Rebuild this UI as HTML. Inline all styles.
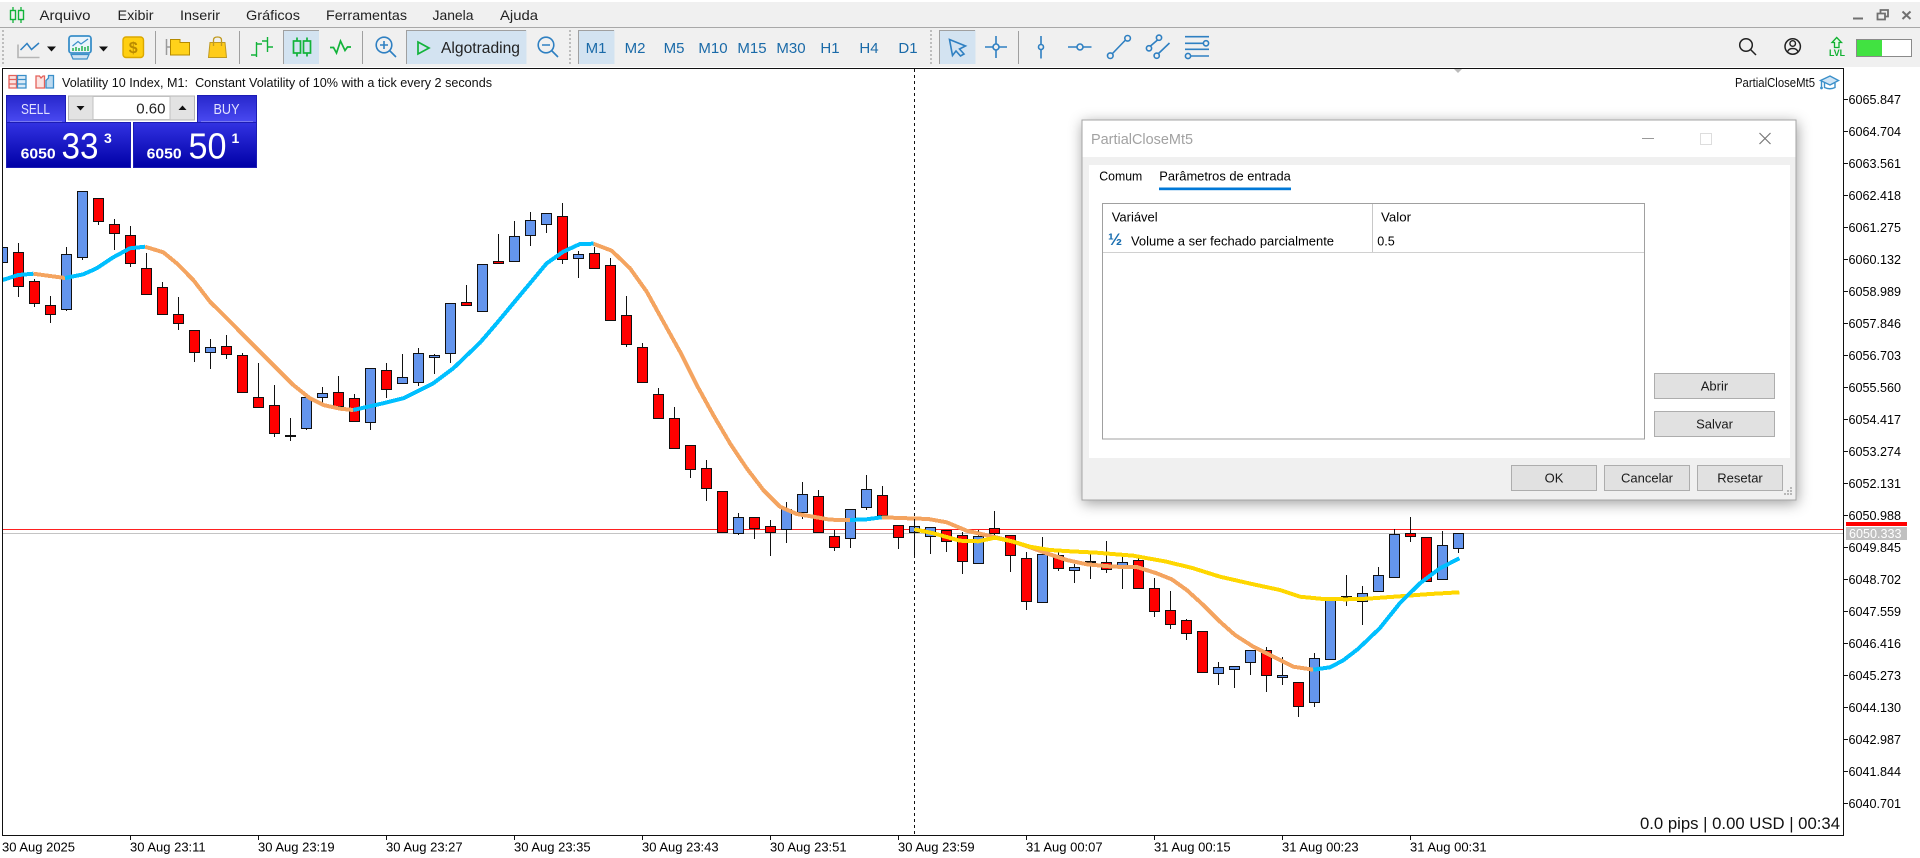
<!DOCTYPE html>
<html lang="pt"><head><meta charset="utf-8"><title>MetaTrader 5</title>
<style>
html,body{margin:0;padding:0;background:#fff;width:1920px;height:858px;overflow:hidden}
svg{display:block;font-family:"Liberation Sans",sans-serif}
.m{font-size:14px;fill:#222}
.tf{font-size:15px;fill:#1a6aa8;text-anchor:middle}
.p{font-size:13px;fill:#000}
.d{font-size:13px;fill:#000}
.c{font-size:13px;fill:#1a1a1a;text-anchor:middle}
.b{fill:#e1e1e1;stroke:#adadad}
.ic{fill:none;stroke:#2f80c2;stroke-width:1.6}
.gn{fill:none;stroke:#12b33a;stroke-width:1.7}
.hl{fill:#d3e3f1;stroke:none}
.sep{stroke:#a0a0a0;stroke-width:1}
.grip{stroke:#bdbdbd;stroke-width:2;stroke-dasharray:2 2}
</style></head><body>
<svg width="1920" height="858" viewBox="0 0 1920 858" xmlns="http://www.w3.org/2000/svg">
<defs>
<linearGradient id="g1" x1="0" y1="0" x2="0" y2="1"><stop offset="0" stop-color="#3232e2"/><stop offset="1" stop-color="#0000a6"/></linearGradient>
<linearGradient id="g2" x1="0" y1="0" x2="0" y2="1"><stop offset="0" stop-color="#2727cc"/><stop offset="1" stop-color="#4a4af2"/></linearGradient>
<clipPath id="cc"><rect x="3" y="69" width="1840" height="766"/></clipPath>
</defs>
<rect width="1920" height="858" fill="#fff"/>
<!-- menu + toolbar -->
<rect y="2" width="1920" height="65" fill="#f0f0f0"/>
<rect y="27" width="1920" height="1" fill="#a8a8a8"/>
<path d="M13 7V23M21 7V23" class="gn" style="stroke-width:1.3"/>
<rect x="10.5" y="10.5" width="5" height="9" class="gn" style="fill:#f0f0f0;stroke-width:1.4"/><rect x="18.5" y="10.5" width="5" height="9" class="gn" style="fill:#f0f0f0;stroke-width:1.4"/>
<g class="m">
<text x="39.5" y="20" textLength="51" lengthAdjust="spacingAndGlyphs">Arquivo</text>
<text x="117.5" y="20" textLength="36" lengthAdjust="spacingAndGlyphs">Exibir</text>
<text x="180" y="20" textLength="40" lengthAdjust="spacingAndGlyphs">Inserir</text>
<text x="246" y="20" textLength="54" lengthAdjust="spacingAndGlyphs">Gráficos</text>
<text x="326" y="20" textLength="81" lengthAdjust="spacingAndGlyphs">Ferramentas</text>
<text x="432.5" y="20" textLength="41" lengthAdjust="spacingAndGlyphs">Janela</text>
<text x="500" y="20" textLength="38" lengthAdjust="spacingAndGlyphs">Ajuda</text>
</g>
<path class="grip" d="M3 30V64M570 30V64M931 30V64"/>
<path d="M18 44.5V57.5H39.5" fill="none" stroke="#b5b5b5" stroke-width="1.6"/>
<path d="M20.5 50L27 43.5L31.5 49.5L39 43" fill="none" stroke="#2f80c2" stroke-width="1.5"/>
<path d="M47 46.5h9l-4.5 5zM99 46.5h9l-4.5 5z" fill="#111"/>
<rect x="69" y="36" width="22" height="17" rx="2.5" fill="#eaf4fb" stroke="#3a8fc9" stroke-width="1.8"/>
<path d="M72.5 46L78 41.5L81 44L88 39" fill="none" stroke="#3a8fc9" stroke-width="1.2"/>
<path d="M73 51V48M76 51V47M79 51V48M82 51V46M85 51V47M88 51V46" stroke="#22b14c" stroke-width="1.5"/>
<path d="M71 54.5H89L87 59H73Z" fill="#cfe3f2" stroke="#3a8fc9" stroke-width="1.2"/>
<rect x="123" y="37" width="20.5" height="20.5" rx="3" fill="#ffcf10" stroke="#dba800" stroke-width="1.4"/>
<text x="133.2" y="53" font-size="16" font-weight="bold" fill="#b98a00" text-anchor="middle">$</text>
<path class="sep" d="M155.5 31V64M239.5 31V64M362.5 31V64M1018.5 31V64"/>
<path d="M166.5 39V55M166.5 47H171" stroke="#9a9a9a" stroke-width="1.5" fill="none"/>
<path d="M170.5 39.5H180V42.5H189.5V55H170.5Z" fill="#ffd21a" stroke="#b58a00" stroke-width="1"/>
<path d="M210 42.5H225L226.5 57.5H208.5Z" fill="#ffcc1a" stroke="#c09a20" stroke-width="1"/>
<path d="M213.5 46V40Q213.5 37 217.5 37Q221.5 37 221.5 40V46" fill="none" stroke="#c09a20" stroke-width="1.3"/>
<path d="M256.5 42V57M251 55H256.5M256.5 44H262M267.5 37V52M262 41H267.5M267.5 47H273" class="gn" style="stroke-width:1.4"/>
<rect x="283" y="30" width="36" height="34" class="hl"/><path d="M283.5 64V30.5H319" fill="none" stroke="#a0a0a0"/>
<path d="M297 37.5V56.5M307 37.5V56.5" class="gn"/><rect x="293.5" y="41" width="7" height="12" class="gn" style="fill:#d3e3f1"/><rect x="303.5" y="41" width="7" height="12" class="gn" style="fill:#d3e3f1"/>
<path d="M330 47.5h3.5l3 5.5l4-12l4.500 9.500l2.500-3.500h3.500" class="gn"/>
<circle cx="384" cy="45" r="7.800" class="ic"/><path d="M380 45h8M384 41v8M389.5 50.5L396 57" class="ic"/>
<rect x="406" y="30" width="120.5" height="34" class="hl"/><path d="M406.5 64V30.5H526" fill="none" stroke="#a0a0a0"/>
<path d="M418 42L429 48L418 54Z" class="gn"/>
<text x="441" y="53" font-size="15.500" fill="#222" textLength="79" lengthAdjust="spacingAndGlyphs">Algotrading</text>
<circle cx="546" cy="45" r="7.800" class="ic"/><path d="M542 45h8M551.5 50.5L558 57" class="ic"/>
<rect x="578" y="30" width="36.5" height="34" class="hl"/><path d="M578.5 64V30.5H614" fill="none" stroke="#a0a0a0"/>
<g class="tf">
<text x="596" y="53">M1</text><text x="635" y="53">M2</text><text x="674" y="53">M5</text><text x="713" y="53">M10</text><text x="752" y="53">M15</text><text x="791" y="53">M30</text><text x="830" y="53">H1</text><text x="869" y="53">H4</text><text x="908" y="53">D1</text>
</g>
<rect x="939" y="30" width="36.5" height="34" class="hl"/><path d="M939.5 64V30.5H975" fill="none" stroke="#a0a0a0"/>
<path d="M949.5 39.5L965.5 46L959.5 49L964 54L960.5 56L956 51L952.5 55.5Z" class="ic"/>
<path d="M985 47H993M999 47H1007M996 36V44M996 50V58" class="ic"/><circle cx="996" cy="47" r="3" class="ic"/>
<path d="M1041 36V44M1041 50V58.5M1068 47H1077M1083 47H1091.5M1112.5 53.5L1125.5 40" class="ic"/><circle cx="1041" cy="47" r="2.5" class="ic"/><circle cx="1080" cy="47" r="3" class="ic"/><circle cx="1110.3" cy="55.7" r="2.8" class="ic"/><circle cx="1127.6" cy="38.3" r="2.8" class="ic"/>
<path d="M1150.5 46L1157.5 40M1158.5 53.5L1169.5 43" class="ic"/><circle cx="1149" cy="48.3" r="2.6" class="ic"/><circle cx="1159" cy="37.7" r="2.6" class="ic"/><circle cx="1156.7" cy="55.7" r="2.6" class="ic"/>
<path d="M1185 36.7H1209M1185 43.3H1203M1185 49.3H1209M1191 56H1209" class="ic"/><circle cx="1206" cy="43.3" r="2.6" class="ic" style="fill:#f0f0f0"/><circle cx="1188" cy="56" r="2.6" class="ic" style="fill:#f0f0f0"/>
<!-- right top -->
<rect x="1853" y="17.5" width="10" height="2" fill="#707070"/>
<path d="M1877.5 13.5h7.500v6h-7.500zM1880.5 13.5v-3.500h7.500v6.500h-3" fill="none" stroke="#707070" stroke-width="1.8"/>
<path d="M1902.5 11.5L1910.5 19M1910.5 11.5L1902.5 19" stroke="#707070" stroke-width="2"/>
<circle cx="1746" cy="45" r="6.3" fill="none" stroke="#222" stroke-width="1.5"/><path d="M1750.5 49.5L1756 55" stroke="#222" stroke-width="1.5"/>
<circle cx="1792.7" cy="46.5" r="7.7" fill="none" stroke="#222" stroke-width="1.5"/><circle cx="1792.7" cy="43.5" r="2.8" fill="none" stroke="#222" stroke-width="1.4"/><path d="M1787.5 52Q1788.5 48.5 1792.7 48.5Q1797 48.5 1798 52" fill="none" stroke="#222" stroke-width="1.4"/>
<path d="M1836.7 37.5L1841.5 42.5H1839V47.5H1834.5V42.5H1832Z" fill="#e8fbe8" stroke="#10b030" stroke-width="1.3"/>
<text x="1837" y="56" font-size="9.5" font-weight="bold" fill="#10b030" text-anchor="middle" textLength="16" lengthAdjust="spacingAndGlyphs">LVL</text>
<rect x="1856.5" y="39.5" width="55" height="17" fill="#fff" stroke="#8a8a8a"/><rect x="1857" y="40" width="25" height="16" fill="#41e241"/>
<!-- chart lines -->
<rect x="3" y="529" width="1840" height="1" fill="#ff2020"/>
<rect x="3" y="533" width="1840" height="1" fill="#c4c4c4"/>
<g clip-path="url(#cc)">
<path stroke="#111" stroke-width="1" fill="none" d="M18.5 243V297M34.5 279V307M50.5 296V323M66.5 247V311M82.5 191V260M98.5 198V225M114.5 219V250M130.5 226V267M146.5 253V295M162.5 282V315M178.5 297V330M194.5 330V362M210.5 339V369M226.5 335V359M242.5 353V393M258.5 363V408M274.5 385V437M290.5 418V441M306.5 397V430M322.5 387V403M338.5 376V407M354.5 394V422M370.5 368V430M386.5 363V398M402.5 354V384M418.5 348V386M434.5 354V374M450.5 303V363M466.5 285V306M498.5 234V264M514.5 221V262M530.5 212V246M546.5 213V233M562.5 203V264M578.5 251V278M594.5 247V269M610.5 258V321M626.5 296V347M642.5 343V383M658.5 388V419M674.5 407V449M690.5 445V478M706.5 460V501M738.5 513V535M754.5 517V539M770.5 520V556M786.5 502V543M802.5 482V519M818.5 490V533M834.5 530V551M850.5 509V548M866.5 475V510M882.5 486V516M898.5 525V549M914.5 521V556M930.5 527V554M946.5 530V552M962.5 532V574M978.5 530V564M994.5 511V535M1010.5 535V572M1026.5 552V610M1042.5 537V603M1058.5 552V571M1074.5 564V583M1090.5 553V579M1106.5 541V573M1122.5 555V589M1138.5 558V589M1154.5 578V617M1170.5 591V629M1186.5 619V640M1218.5 662V685M1234.5 666V688M1250.5 650V675M1266.5 647V692M1282.5 657V685M1298.5 682V717M1314.5 653V707M1346.5 575V606M1362.5 586V625M1378.5 567V592M1394.5 529V578M1410.5 517V542M1442.5 531V580M1458.5 533V553"/>
<path fill="#ff0000" stroke="#111" stroke-width="1" d="M13.5 252.5h10v34h-10zM29.5 281.5h10v22h-10zM45.5 305.5h10v9h-10zM93.5 198.5h10v23h-10zM109.5 224.5h10v9h-10zM125.5 235.5h10v28h-10zM141.5 268.5h10v26h-10zM157.5 287.5h10v27h-10zM173.5 314.5h10v9h-10zM189.5 330.5h10v22h-10zM221.5 346.5h10v8h-10zM237.5 355.5h10v37h-10zM253.5 397.5h10v10h-10zM269.5 405.5h10v28h-10zM285.5 435.5h10v1h-10zM333.5 392.5h10v14h-10zM349.5 398.5h10v23h-10zM381.5 370.5h10v19h-10zM461.5 302.5h10v3h-10zM493.5 261.5h10v2h-10zM557.5 216.5h10v43h-10zM589.5 253.5h10v15h-10zM605.5 265.5h10v55h-10zM621.5 315.5h10v29h-10zM637.5 347.5h10v35h-10zM653.5 394.5h10v24h-10zM669.5 418.5h10v30h-10zM685.5 445.5h10v24h-10zM701.5 468.5h10v20h-10zM717.5 491.5h10v41h-10zM749.5 517.5h10v11h-10zM765.5 526.5h10v6h-10zM813.5 496.5h10v36h-10zM829.5 536.5h10v11h-10zM877.5 495.5h10v20h-10zM893.5 525.5h10v12h-10zM941.5 530.5h10v11h-10zM957.5 535.5h10v26h-10zM989.5 528.5h10v5h-10zM1005.5 535.5h10v20h-10zM1021.5 558.5h10v43h-10zM1053.5 555.5h10v13h-10zM1085.5 561.5h10v1h-10zM1101.5 562.5h10v7h-10zM1133.5 560.5h10v28h-10zM1149.5 588.5h10v23h-10zM1165.5 610.5h10v14h-10zM1181.5 620.5h10v13h-10zM1197.5 631.5h10v41h-10zM1261.5 650.5h10v25h-10zM1293.5 682.5h10v24h-10zM1341.5 596.5h10v1h-10zM1405.5 533.5h10v3h-10zM1421.5 537.5h10v44h-10z"/>
<path fill="#6495ed" stroke="#111" stroke-width="1" d="M-2.5 247.5h10v15h-10zM61.5 254.5h10v55h-10zM77.5 191.5h10v66h-10zM205.5 347.5h10v5h-10zM301.5 397.5h10v31h-10zM317.5 393.5h10v4h-10zM365.5 368.5h10v54h-10zM397.5 377.5h10v6h-10zM413.5 353.5h10v29h-10zM429.5 355.5h10v2h-10zM445.5 303.5h10v50h-10zM477.5 264.5h10v47h-10zM509.5 236.5h10v25h-10zM525.5 220.5h10v15h-10zM541.5 213.5h10v11h-10zM573.5 254.5h10v4h-10zM733.5 517.5h10v16h-10zM781.5 509.5h10v20h-10zM797.5 494.5h10v18h-10zM845.5 509.5h10v29h-10zM861.5 489.5h10v18h-10zM909.5 526.5h10v6h-10zM925.5 527.5h10v9h-10zM973.5 536.5h10v27h-10zM1037.5 554.5h10v48h-10zM1069.5 567.5h10v3h-10zM1117.5 562.5h10v4h-10zM1213.5 667.5h10v6h-10zM1229.5 666.5h10v3h-10zM1245.5 650.5h10v12h-10zM1277.5 675.5h10v2h-10zM1309.5 658.5h10v44h-10zM1325.5 597.5h10v62h-10zM1357.5 593.5h10v8h-10zM1373.5 575.5h10v16h-10zM1389.5 534.5h10v43h-10zM1437.5 545.5h10v34h-10zM1453.5 533.5h10v15h-10z"/>
<g fill="none" stroke-width="4" stroke-linejoin="round" shape-rendering="crispEdges">
<path stroke="#f4a460" d="M33.3 273.7L50 276L65 278M145 246.7L163.3 252.3L176.7 263.3L193.3 280L210 301.7L226.7 318.3L243.3 335L260 351.7L275 366.7L293.3 385L310 398.3L323.3 405L340 408.7L353.3 410M593.3 243.7L611.7 250.7L630 268.3L646.7 291.7L663.3 321.7L680 351.7L696.7 385L713.3 415L730 443.3L746.7 468.3L763.3 490L780 506.7L796.7 514L813.3 516.7L830 519.7L850 520M881.7 517.3L900 518L928.3 519L946.7 522.3L966.7 530.7L993.3 536.7L1013.3 541.7L1030 547.3L1046.7 553.3L1066.7 560L1086.7 564.3L1113.3 566.7L1136.7 567L1156.7 573.3L1171.7 579.3L1186.7 590L1203.3 605L1220 621.7L1235 635L1253.3 646.7L1270 655L1293.3 666.7L1313.3 669.7"/>
<path stroke="#ffd700" d="M914.3 529.3L933.3 533.3L960 540.7L978.3 541.3L995 537.7L1013.3 541.7L1030 546.7L1050 550L1070 551.3L1096.7 552.7L1133.3 555.7L1166.7 561.7L1193.3 568.3L1220 576.7L1253.3 584.3L1280 590L1300 596.7L1323.3 599L1346.7 599.3L1366.7 598.7L1400 596.3L1430 594L1459.3 592.3"/>
<path stroke="#00bfff" d="M2.7 280L18.3 275L33.3 273.7M65 278L83.3 274.3L96.7 268.3L113.3 257.3L130 248.3L145 246.7M353.3 410L380 404L403.3 398.3L433.3 383.3L453.3 368.3L480 342.7L496.7 323.3L513.3 303.3L530 283.3L546.7 263.3L563.3 251.7L580 244L593.3 243.7M850 520L866.7 519.3L881.7 517.3M1313.3 669.7L1330 667.3L1343 660.5L1358 649L1380 628L1400 603L1420 583.3L1440 568.3L1459.3 558.3"/>
</g>
</g>
<path d="M914.5 69V835" stroke="#111" stroke-width="1" stroke-dasharray="3 3"/>
<path d="M1453 68h10l-5 5z" fill="#bbb"/>
<!-- frame -->
<rect x="2" y="68" width="1842" height="1" fill="#111"/><rect x="2" y="68" width="1" height="768" fill="#111"/><rect x="1843" y="68" width="1" height="768" fill="#111"/><rect x="2" y="835" width="1842" height="1" fill="#111"/>
<!-- chart header -->
<g stroke-width="1.3" fill="none">
<path d="M16.5 75.5H9V88H16.5ZM9 79.5H16.5M9 84H16.5" stroke="#e4615a" fill="#fbe3e1"/>
<path d="M17.5 75.5H26V88H17.5ZM17.5 79.5H26M17.5 84H26" stroke="#3a8fc9" fill="#dcebf7"/>
<path d="M36 76H39.5L41 78L43 76H44.5V88H36Z" stroke="#e4615a" fill="#fbe3e1"/>
<path d="M46 80.5L48.5 78V75.5H53.5V88H46Z" stroke="#3a8fc9" fill="#bcdaf0"/>
</g>
<text x="62" y="87" font-size="13" fill="#111" textLength="430" lengthAdjust="spacingAndGlyphs">Volatility 10 Index, M1:&#160; Constant Volatility of 10% with a tick every 2 seconds</text>
<text x="1735" y="87" font-size="13" fill="#111" textLength="80" lengthAdjust="spacingAndGlyphs">PartialCloseMt5</text>
<path d="M1820.5 80.5L1830 76L1838.5 80.5L1830 85Z" fill="#cfe4f5" stroke="#3a8fc9" stroke-width="1.4"/>
<path d="M1824.5 83V87.5Q1830 90 1835 87.5V83M1821.5 81V87" fill="none" stroke="#3a8fc9" stroke-width="1.4"/><circle cx="1821.5" cy="88" r="1.4" fill="#3a8fc9"/>
<!-- trade panel -->
<rect x="6.5" y="95.5" width="59" height="27" fill="url(#g2)" stroke="#1c1cb4"/>
<rect x="197.5" y="95.5" width="59" height="27" fill="url(#g2)" stroke="#1c1cb4"/>
<rect x="6.5" y="122.5" width="124" height="45" fill="url(#g1)" stroke="#1c1cb4"/>
<rect x="133.5" y="122.5" width="123" height="45" fill="url(#g1)" stroke="#1c1cb4"/>
<path d="M10 121.5H62M201 121.5H253" stroke="#7878f0" stroke-width="1"/>
<rect x="66" y="95" width="131" height="27" fill="#fff"/>
<rect x="68.5" y="96" width="126" height="24" fill="#e3e3e3" stroke="#b4b4b4"/>
<rect x="93" y="96.5" width="77" height="23" fill="#fff" stroke="#c0c0c0"/>
<path d="M76.5 106h8l-4 4.500zM178.5 110h8l-4-4.500z" fill="#111"/>
<text x="165.5" y="113.500" font-size="15" fill="#222" text-anchor="end">0.60</text>
<text x="21" y="114" font-size="15" fill="#e2e2ff" textLength="29" lengthAdjust="spacingAndGlyphs">SELL</text>
<text x="213.5" y="114" font-size="15" fill="#e2e2ff" textLength="26" lengthAdjust="spacingAndGlyphs">BUY</text>
<g fill="#fff">
<text x="20.7" y="158.700" font-size="15" font-weight="bold" textLength="35" lengthAdjust="spacingAndGlyphs">6050</text>
<text x="61.5" y="158.700" font-size="36" textLength="37" lengthAdjust="spacingAndGlyphs">33</text>
<text x="104" y="143" font-size="14" font-weight="bold">3</text>
<text x="146.7" y="158.700" font-size="15" font-weight="bold" textLength="35" lengthAdjust="spacingAndGlyphs">6050</text>
<text x="188.5" y="158.700" font-size="36" textLength="38" lengthAdjust="spacingAndGlyphs">50</text>
<text x="231.5" y="143" font-size="14" font-weight="bold">1</text>
</g>
<!-- price axis -->
<g class="p">
<text x="1848.5" y="104.2" textLength="52.5" lengthAdjust="spacingAndGlyphs">6065.847</text>
<text x="1848.5" y="136.2" textLength="52.5" lengthAdjust="spacingAndGlyphs">6064.704</text>
<text x="1848.5" y="168.2" textLength="52.5" lengthAdjust="spacingAndGlyphs">6063.561</text>
<text x="1848.5" y="200.2" textLength="52.5" lengthAdjust="spacingAndGlyphs">6062.418</text>
<text x="1848.5" y="232.2" textLength="52.5" lengthAdjust="spacingAndGlyphs">6061.275</text>
<text x="1848.5" y="264.2" textLength="52.5" lengthAdjust="spacingAndGlyphs">6060.132</text>
<text x="1848.5" y="296.2" textLength="52.5" lengthAdjust="spacingAndGlyphs">6058.989</text>
<text x="1848.5" y="328.2" textLength="52.5" lengthAdjust="spacingAndGlyphs">6057.846</text>
<text x="1848.5" y="360.2" textLength="52.5" lengthAdjust="spacingAndGlyphs">6056.703</text>
<text x="1848.5" y="392.2" textLength="52.5" lengthAdjust="spacingAndGlyphs">6055.560</text>
<text x="1848.5" y="424.2" textLength="52.5" lengthAdjust="spacingAndGlyphs">6054.417</text>
<text x="1848.5" y="456.2" textLength="52.5" lengthAdjust="spacingAndGlyphs">6053.274</text>
<text x="1848.5" y="488.2" textLength="52.5" lengthAdjust="spacingAndGlyphs">6052.131</text>
<text x="1848.5" y="520.2" textLength="52.5" lengthAdjust="spacingAndGlyphs">6050.988</text>
<text x="1848.5" y="552.2" textLength="52.5" lengthAdjust="spacingAndGlyphs">6049.845</text>
<text x="1848.5" y="584.2" textLength="52.5" lengthAdjust="spacingAndGlyphs">6048.702</text>
<text x="1848.5" y="616.2" textLength="52.5" lengthAdjust="spacingAndGlyphs">6047.559</text>
<text x="1848.5" y="648.2" textLength="52.5" lengthAdjust="spacingAndGlyphs">6046.416</text>
<text x="1848.5" y="680.2" textLength="52.5" lengthAdjust="spacingAndGlyphs">6045.273</text>
<text x="1848.5" y="712.2" textLength="52.5" lengthAdjust="spacingAndGlyphs">6044.130</text>
<text x="1848.5" y="744.2" textLength="52.5" lengthAdjust="spacingAndGlyphs">6042.987</text>
<text x="1848.5" y="776.2" textLength="52.5" lengthAdjust="spacingAndGlyphs">6041.844</text>
<text x="1848.5" y="808.2" textLength="52.5" lengthAdjust="spacingAndGlyphs">6040.701</text>
</g>
<path stroke="#111" d="M1844 99.5h4M1844 131.5h4M1844 163.5h4M1844 195.5h4M1844 227.5h4M1844 259.5h4M1844 291.5h4M1844 323.5h4M1844 355.5h4M1844 387.5h4M1844 419.5h4M1844 451.5h4M1844 483.5h4M1844 515.5h4M1844 547.5h4M1844 579.5h4M1844 611.5h4M1844 643.5h4M1844 675.5h4M1844 707.5h4M1844 739.5h4M1844 771.5h4M1844 803.5h4"/>
<rect x="1846" y="522" width="61" height="4" fill="#ff0000"/>
<rect x="1846" y="527" width="61" height="13" fill="#c0c0c0"/>
<text x="1849" y="538" font-size="13" fill="#fff" textLength="52.5" lengthAdjust="spacingAndGlyphs">6050.333</text>
<!-- time axis -->
<path stroke="#111" d="M130.5 836v4M258.5 836v4M386.5 836v4M514.5 836v4M642.5 836v4M770.5 836v4M898.5 836v4M1026.5 836v4M1154.5 836v4M1282.5 836v4M1410.5 836v4"/>
<g class="d">
<text x="2" y="851.5">30 Aug 2025</text>
<text x="130" y="851.5">30 Aug 23:11</text>
<text x="258" y="851.5">30 Aug 23:19</text>
<text x="386" y="851.5">30 Aug 23:27</text>
<text x="514" y="851.5">30 Aug 23:35</text>
<text x="642" y="851.5">30 Aug 23:43</text>
<text x="770" y="851.5">30 Aug 23:51</text>
<text x="898" y="851.5">30 Aug 23:59</text>
<text x="1026" y="851.5">31 Aug 00:07</text>
<text x="1154" y="851.5">31 Aug 00:15</text>
<text x="1282" y="851.5">31 Aug 00:23</text>
<text x="1410" y="851.5">31 Aug 00:31</text>
</g>
<text x="1640" y="829" font-size="16.7" fill="#111" textLength="200" lengthAdjust="spacingAndGlyphs">0.0 pips | 0.00 USD | 00:34</text>
<!-- dialog -->
<rect x="1082" y="120" width="714" height="380" fill="#f0f0f0" stroke="#a6a6a6" style="filter:drop-shadow(1px 3px 7px rgba(0,0,0,.38))"/>
<rect x="1082.5" y="120.5" width="713" height="36.5" fill="#fff"/>
<text x="1091" y="144" font-size="14.5" fill="#a2a2a2" textLength="102" lengthAdjust="spacingAndGlyphs">PartialCloseMt5</text>
<path d="M1642 138.5H1654" stroke="#999"/>
<rect x="1700.5" y="133.5" width="11" height="11" fill="none" stroke="#ddd"/>
<path d="M1759.5 133L1770.5 144M1770.5 133L1759.5 144" stroke="#777" stroke-width="1.2"/>
<rect x="1089" y="165" width="701" height="293" fill="#fff"/>
<text x="1099.3" y="180.5" class="d" textLength="43" lengthAdjust="spacingAndGlyphs">Comum</text>
<text x="1159.3" y="180.5" class="d" textLength="131.5" lengthAdjust="spacingAndGlyphs">Parâmetros de entrada</text>
<rect x="1159" y="187.5" width="132" height="2.7" fill="#0078d7"/>
<rect x="1102.5" y="203.5" width="542" height="235.5" fill="#fff" stroke="#a0a0a0"/>
<text x="1111.7" y="221.3" class="d" textLength="46" lengthAdjust="spacingAndGlyphs">Variável</text>
<text x="1381" y="221.3" class="d" textLength="30" lengthAdjust="spacingAndGlyphs">Valor</text>
<path d="M1372.5 204V253" stroke="#c8c8c8"/>
<path d="M1103 252.5H1644" stroke="#d0d0d0"/>
<text x="1108" y="245" font-size="17" font-weight="bold" fill="#1b6fb0">½</text>
<text x="1131" y="245.3" class="d" textLength="203" lengthAdjust="spacingAndGlyphs">Volume a ser fechado parcialmente</text>
<text x="1377.3" y="245.3" class="d" textLength="17.5" lengthAdjust="spacingAndGlyphs">0.5</text>
<rect x="1654.5" y="373.5" width="120" height="25" class="b"/><text x="1714.5" y="390.7" class="c">Abrir</text>
<rect x="1654.5" y="411.5" width="120" height="25" class="b"/><text x="1714.5" y="428.7" class="c">Salvar</text>
<rect x="1511.5" y="465.5" width="85" height="25" class="b"/><text x="1554" y="482.7" class="c">OK</text>
<rect x="1604.5" y="465.5" width="85" height="25" class="b"/><text x="1647" y="482.7" class="c">Cancelar</text>
<rect x="1697.5" y="465.5" width="85" height="25" class="b"/><text x="1740" y="482.7" class="c">Resetar</text>
<path fill="#b8b8b8" d="M1790 487h2v2h-2zM1787 490h2v2h-2zM1790 490h2v2h-2zM1784 493h2v2h-2zM1787 493h2v2h-2zM1790 493h2v2h-2z"/>
</svg>
</body></html>
